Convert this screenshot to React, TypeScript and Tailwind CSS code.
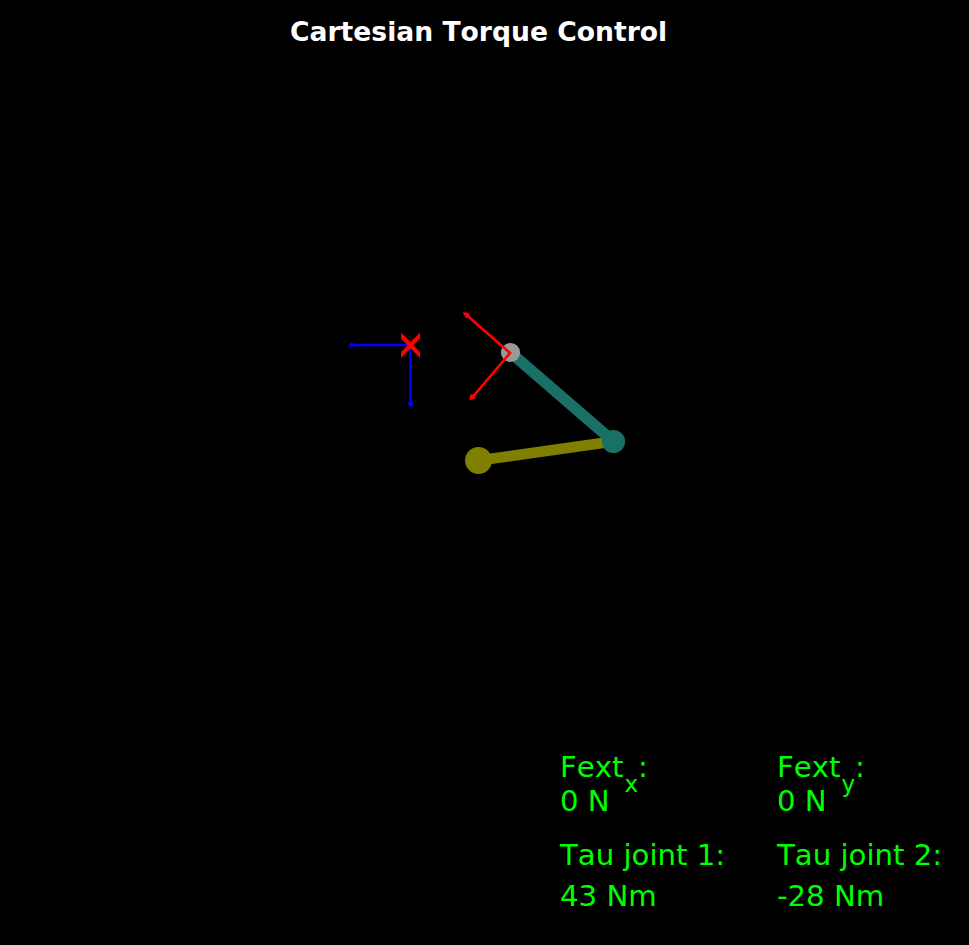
import React from "react";

function Readout({ name, axis, value }: { name: string; axis: string; value: string }) {
  return (
    <div className="h-[88px]">
      <div className="flex h-[34px] leading-[34px]">
        <span>{name}</span>
        <span className="relative top-[17px] ml-px text-[23px]">{axis}</span>
        <span>:</span>
      </div>
      <div className="h-[34px] leading-[34px]">{value}</div>
    </div>
  );
}

function Torque({ label, value }: { label: string; value: string }) {
  return (
    <div>
      <div className="h-[41px] leading-[34px]">{label}</div>
      <div className="h-[34px] leading-[34px]">{value}</div>
    </div>
  );
}

export default function App() {
  return (
    <main className="flex h-[945px] w-[969px] flex-col overflow-hidden bg-black font-['DejaVu_Sans',sans-serif] [font-kerning:none]">
      <h1 className="h-[64px] shrink-0 pl-[290px] pt-[16px] text-[26.6px] font-bold leading-[32px] whitespace-nowrap text-white">
        Cartesian Torque Control
      </h1>
      <svg className="h-[686px] w-[969px] shrink-0" viewBox="0 64 969 686" fill="none">
        <defs>
          <clipPath id="marker">
            <rect x="401" y="330" width="19" height="30" />
          </clipPath>
        </defs>
        <path d="M478.5 460.5 L613 441.5" stroke="#808000" strokeWidth="10.7" />
        <circle cx="478.5" cy="460.5" r="13.5" fill="#808000" />
        <path d="M613.5 441.5 L510.5 352.5" stroke="#197066" strokeWidth="11.2" />
        <circle cx="613.5" cy="441.5" r="11.6" fill="#197066" />
        <circle cx="510.5" cy="352.5" r="9.6" fill="#999" />
        <path d="M410.5 345 H350 M410.5 345 V406" stroke="#00f" strokeWidth="2.6" />
        <path d="M349 345 L350.5 343.4 H353.3 V346.6 H350.5 Z M410.5 406.7 L408.5 404.5 V402.5 H412.5 V404.5 Z" fill="#00f" stroke="#00f" strokeWidth="0.8" />
        <path d="M398.5 333 L422.5 357.5 M422.5 333 L398.5 357.5" stroke="#f00" strokeWidth="4.3" clipPath="url(#marker)" />
        <path d="M464.5 313.3 L510 353 L471 399" stroke="#f00" strokeWidth="2.7" />
        <path d="M464 313 L468.3 313.5 L469 316 L466.3 317.2 Z M470.3 399.2 L471.1 395 L473.5 395 L474.7 397.8 Z" fill="#f00" stroke="#f00" strokeWidth="1.6" strokeLinejoin="round" />
      </svg>
      <section className="grid shrink-0 grid-cols-[217px_192px] pl-[560px] text-[29.2px] whitespace-nowrap text-[#00ff00]">
        <Readout name="Fext" axis="x" value="0 N" />
        <Readout name="Fext" axis="y" value="0 N" />
        <Torque label="Tau joint 1:" value="43 Nm" />
        <Torque label="Tau joint 2:" value="-28 Nm" />
      </section>
    </main>
  );
}
